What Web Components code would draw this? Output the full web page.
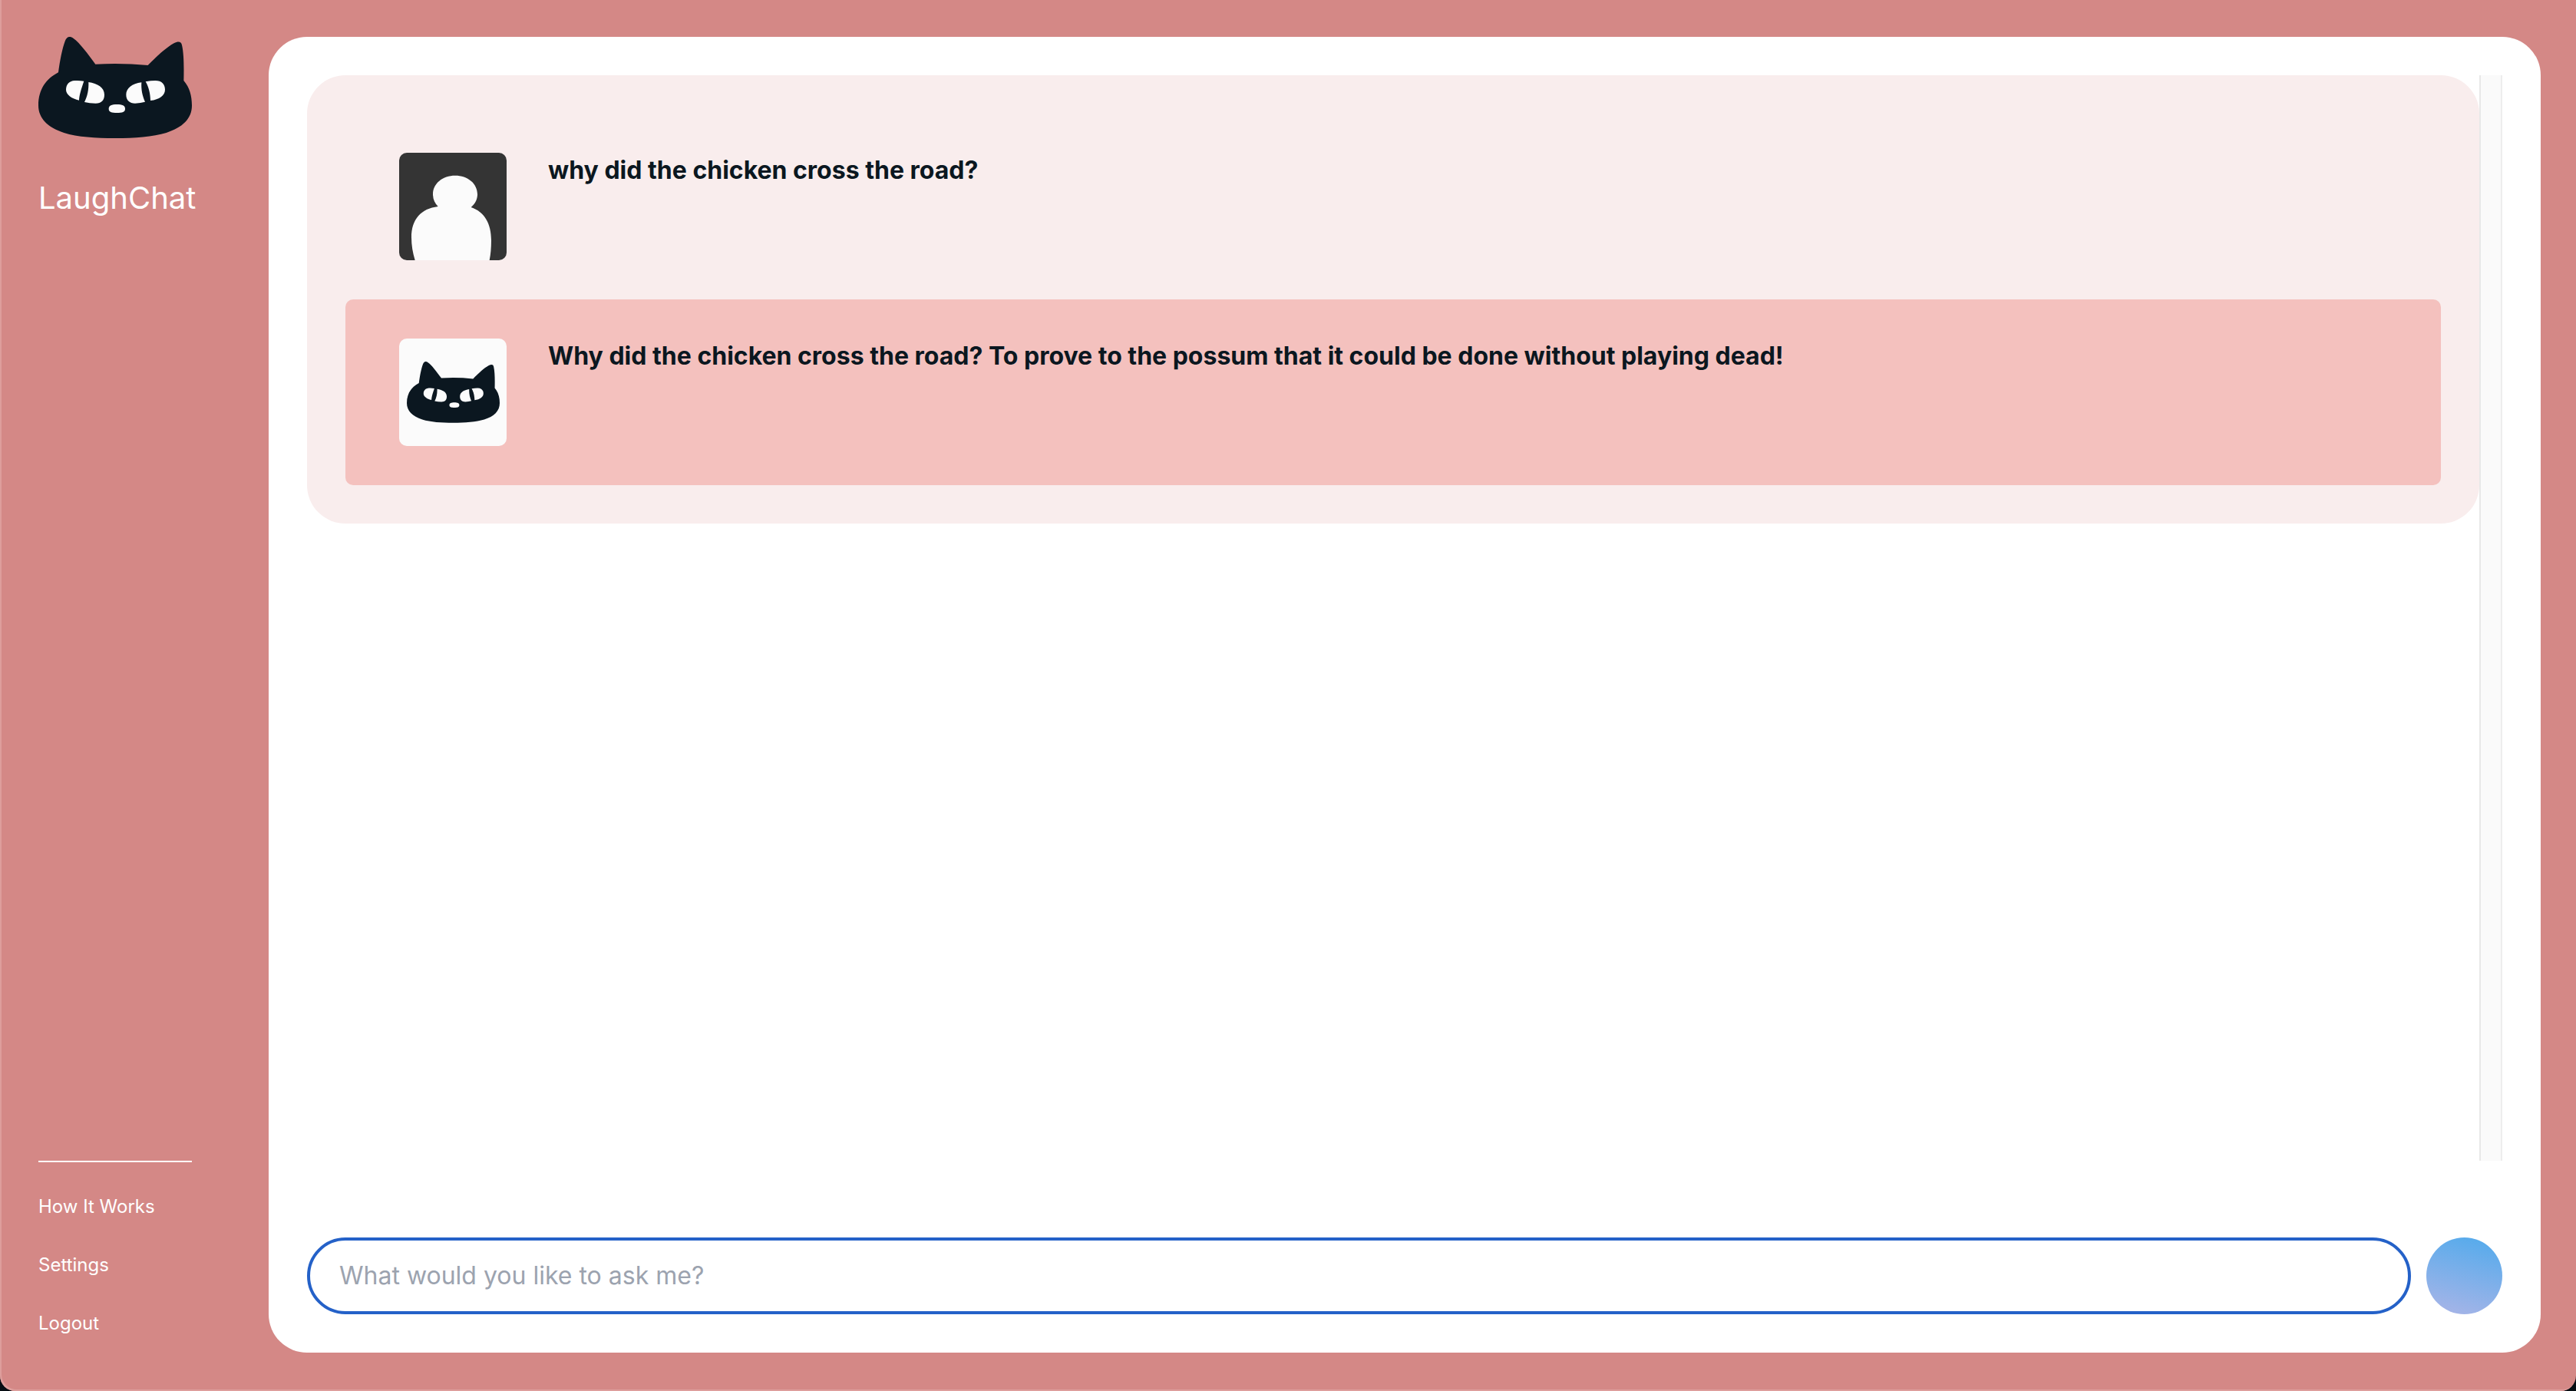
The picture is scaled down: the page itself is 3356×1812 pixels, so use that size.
<!DOCTYPE html>
<html lang="en">
<head>
<meta charset="utf-8">
<meta name="viewport" content="width=device-width, initial-scale=1">
<title>LaughChat</title>
<style>
  html { height: 100%; background: #070d13; }
  body {
    margin: 0; height: 100%;
    font-family: Inter, "Liberation Sans", sans-serif;
    color: #0b1720;
    --rose: #d48886;
    --ink: #0b1720;
  }
</style>
</head>
<body>
<laugh-app>
  <app-sidebar slot="sidebar">
    <side-link href="#how">How It Works</side-link>
    <side-link href="#settings">Settings</side-link>
    <side-link href="#logout">Logout</side-link>
  </app-sidebar>
  <message-list>
    <chat-message><person-avatar slot="avatar"></person-avatar>why did the chicken cross the road?</chat-message>
    <chat-message reply><cat-avatar slot="avatar"></cat-avatar>Why did the chicken cross the road? To prove to the possum that it could be done without playing dead!</chat-message>
  </message-list>
  <prompt-form></prompt-form>
</laugh-app>

<script>
  const define = (name, html) => customElements.define(name, class extends HTMLElement {
    constructor() {
      super();
      const template = document.createElement('template');
      template.innerHTML = html;
      this.attachShadow({ mode: 'open' }).append(template.content.cloneNode(true));
    }
  });

  define('cat-face', `
    <style>
      :host { display: block; }
      svg { display: block; width: 100%; height: auto; }
    </style>
    <svg viewBox="150 144 600 396" aria-hidden="true">
      <path fill="#0b1720" d="M228 283 C234 238 243 190 254 161 C260 144 272 139 287 150 C312 168 343 210 373 251 Q475 245 578 255 C612 221 650 185 680 169 C697 160 708 162 711 176 C719 210 719 262 718 315 C741 342 750 374 750 412 C750 464 714 498 650 519 C598 535 526 540 450 540 C374 540 303 536 250 519 C186 498 150 462 150 412 C150 350 180 308 228 283Z"/>
      <g fill="#fbfbfb">
        <path d="M328 317 C316 352 310 372 309 392 C281 386 258 370 258 351 C258 329 272 316 292 315 Q311 314 328 317Z"/>
        <path d="M346 321 C381 326 408 342 408 370 C408 393 396 404 374 404 Q350 404 330 399 C342 376 347 351 346 321Z"/>
        <path d="M553 322 C516 327 493 345 493 370 C493 393 507 404 528 404 Q550 403 567 398 C557 376 551 350 553 322Z"/>
        <path d="M569 319 Q590 315 607 315 C632 315 645 329 645 350 C645 373 623 389 588 393 C587 366 582 341 569 319Z"/>
        <path d="M457 408 C478 408 489 412 489 425 C489 438 478 441 457 441 C436 441 425 438 425 425 C425 412 436 408 457 408Z"/>
      </g>
    </svg>`);

  define('cat-avatar', `
    <style>
      :host { display: block; box-sizing: border-box; width: 140px; height: 140px; padding: 30px 9px 0 10px; border-radius: 10px; background: #fbfbfb; }
    </style>
    <cat-face></cat-face>`);

  define('person-avatar', `
    <style>
      :host { display: block; width: 140px; height: 140px; border-radius: 10px; background: #343434; overflow: hidden; }
      svg { display: block; width: 100%; height: 100%; }
    </style>
    <svg viewBox="60 58 420 420" aria-hidden="true">
      <path fill="#fbfbfb" d="M122 478 C113 448 108 420 108 388 C108 318 146 276 212 268 C199 255 192 240 192 219 C192 178 230 147 279 147 C328 147 366 178 366 220 C366 240 357 257 341 271 C394 289 420 336 420 400 Q420 445 413 478Z"/>
    </svg>`);

  define('side-link', `
    <style>
      :host { display: block; }
      a { display: block; font-size: 24px; line-height: 76px; color: #fff; text-decoration: none; }
    </style>
    <a><slot></slot></a>`);

  define('app-sidebar', `
    <style>
      :host { display: flex; flex-direction: column; justify-content: space-between; box-sizing: border-box; width: 350px; padding: 48px 100px 50px 50px; color: #fff; }
      h1 { margin: 48px 0 0; font-size: 40px; font-weight: 400; line-height: 60px; }
      nav { border-top: 2px solid #fff; padding-top: 20px; }
    </style>
    <header>
      <cat-face></cat-face>
      <h1>LaughChat</h1>
    </header>
    <nav aria-label="Main"><slot></slot></nav>`);

  define('chat-message', `
    <style>
      :host { display: flex; align-items: flex-start; gap: 54px; padding: 51px 70px; border-radius: 10px; }
      :host([reply]) { background: #f4c1be; }
      p { flex: 1; margin: 0; font-size: 32px; font-weight: 700; line-height: 46px; }
    </style>
    <slot name="avatar"></slot>
    <p><slot></slot></p>`);

  define('message-list', `
    <style>
      :host { display: flex; flex: 1; min-height: 0; }
      .scroll { flex: 1; min-width: 0; overflow: hidden; }
      .thread { display: flex; flex-direction: column; padding: 50px; border-radius: 50px; background: #f9eded; }
      .track { box-sizing: border-box; width: 30px; border: solid #e8e8e8; border-width: 0 2px; border-right-color: #ededed; background: #fafafa; }
    </style>
    <div class="scroll"><div class="thread"><slot></slot></div></div>
    <div class="track"></div>`);

  define('prompt-form', `
    <style>
      :host { display: block; }
      form { display: flex; gap: 20px; }
      input { box-sizing: border-box; flex: 1; min-width: 0; height: 100px; padding: 0 38px 2px; border: 4px solid #2461c8; border-radius: 50px; background: #fff; font: inherit; font-size: 32px; color: var(--ink); outline: none; }
      input::placeholder { color: #9ca3af; opacity: 1; }
      button { width: 99px; height: 100px; padding: 0; border: 0; border-radius: 50%; background: linear-gradient(15deg, #abb5e7, #50aaec); cursor: pointer; }
    </style>
    <form>
      <input type="text" aria-label="Your question" placeholder="What would you like to ask me?">
      <button type="button" aria-label="Send"></button>
    </form>`);

  define('laugh-app', `
    <style>
      :host { display: flex; box-sizing: border-box; min-height: 100%; background: var(--rose); border-radius: 0 0 20px 20px; box-shadow: inset 2px -2px 0 #dd9e9c; }
      main { flex: 1; min-width: 0; display: flex; flex-direction: column; gap: 100px; margin: 48px 46px 50px 0; padding: 50px; border-radius: 50px; background: #fff; }
    </style>
    <slot name="sidebar"></slot>
    <main><slot></slot></main>`);

  document.querySelectorAll('side-link').forEach(link => {
    link.shadowRoot.querySelector('a').href = link.getAttribute('href');
  });
</script>
</body>
</html>
